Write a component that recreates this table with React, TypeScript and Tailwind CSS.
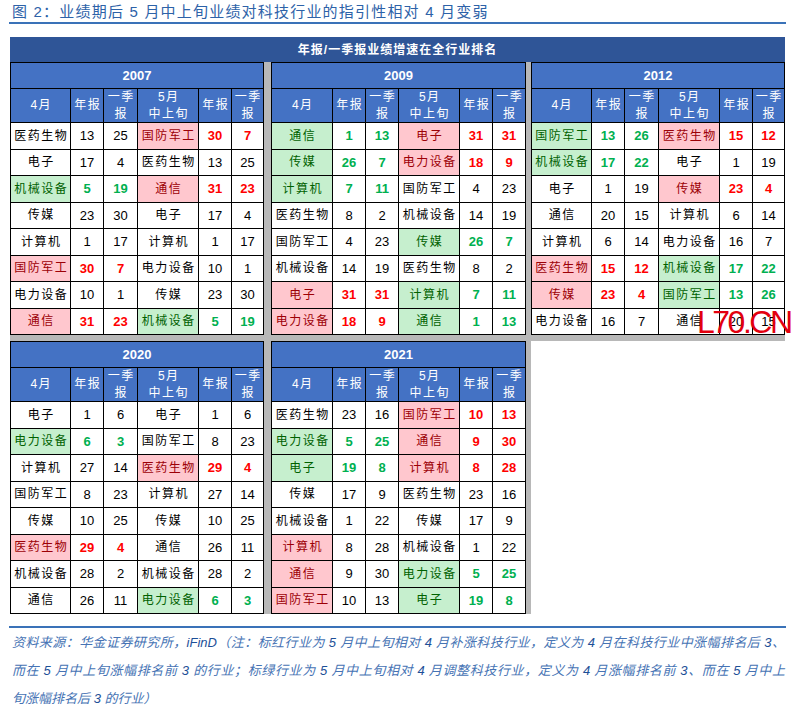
import React from "react";

type Mark = "r" | "g" | "n" | "";
// [name, 年报, 一季报, mark] ; mark "n" = pink name but plain numbers
type Side = [string, number, number, Mark];
type Row = [Side, Side];

const panels: { year: string; rows: Row[] }[] = [
  {
    year: "2007",
    rows: [
      [["医药生物", 13, 25, ""], ["国防军工", 30, 7, "r"]],
      [["电子", 17, 4, ""], ["医药生物", 13, 25, ""]],
      [["机械设备", 5, 19, "g"], ["通信", 31, 23, "r"]],
      [["传媒", 23, 30, ""], ["电子", 17, 4, ""]],
      [["计算机", 1, 17, ""], ["计算机", 1, 17, ""]],
      [["国防军工", 30, 7, "r"], ["电力设备", 10, 1, ""]],
      [["电力设备", 10, 1, ""], ["传媒", 23, 30, ""]],
      [["通信", 31, 23, "r"], ["机械设备", 5, 19, "g"]],
    ],
  },
  {
    year: "2009",
    rows: [
      [["通信", 1, 13, "g"], ["电子", 31, 31, "r"]],
      [["传媒", 26, 7, "g"], ["电力设备", 18, 9, "r"]],
      [["计算机", 7, 11, "g"], ["国防军工", 4, 23, ""]],
      [["医药生物", 8, 2, ""], ["机械设备", 14, 19, ""]],
      [["国防军工", 4, 23, ""], ["传媒", 26, 7, "g"]],
      [["机械设备", 14, 19, ""], ["医药生物", 8, 2, ""]],
      [["电子", 31, 31, "r"], ["计算机", 7, 11, "g"]],
      [["电力设备", 18, 9, "r"], ["通信", 1, 13, "g"]],
    ],
  },
  {
    year: "2012",
    rows: [
      [["国防军工", 13, 26, "g"], ["医药生物", 15, 12, "r"]],
      [["机械设备", 17, 22, "g"], ["电子", 1, 19, ""]],
      [["电子", 1, 19, ""], ["传媒", 23, 4, "r"]],
      [["通信", 20, 15, ""], ["计算机", 6, 14, ""]],
      [["计算机", 6, 14, ""], ["电力设备", 16, 7, ""]],
      [["医药生物", 15, 12, "r"], ["机械设备", 17, 22, "g"]],
      [["传媒", 23, 4, "r"], ["国防军工", 13, 26, "g"]],
      [["电力设备", 16, 7, ""], ["通信", 20, 15, ""]],
    ],
  },
  {
    year: "2020",
    rows: [
      [["电子", 1, 6, ""], ["电子", 1, 6, ""]],
      [["电力设备", 6, 3, "g"], ["国防军工", 8, 23, ""]],
      [["计算机", 27, 14, ""], ["医药生物", 29, 4, "r"]],
      [["国防军工", 8, 23, ""], ["计算机", 27, 14, ""]],
      [["传媒", 10, 25, ""], ["传媒", 10, 25, ""]],
      [["医药生物", 29, 4, "r"], ["通信", 26, 11, ""]],
      [["机械设备", 28, 2, ""], ["机械设备", 28, 2, ""]],
      [["通信", 26, 11, ""], ["电力设备", 6, 3, "g"]],
    ],
  },
  {
    year: "2021",
    rows: [
      [["医药生物", 23, 16, ""], ["国防军工", 10, 13, "r"]],
      [["电力设备", 5, 25, "g"], ["通信", 9, 30, "r"]],
      [["电子", 19, 8, "g"], ["计算机", 8, 28, "r"]],
      [["传媒", 17, 9, ""], ["医药生物", 23, 16, ""]],
      [["机械设备", 1, 22, ""], ["传媒", 17, 9, ""]],
      [["计算机", 8, 28, "n"], ["机械设备", 1, 22, ""]],
      [["通信", 9, 30, "n"], ["电力设备", 5, 25, "g"]],
      [["国防军工", 10, 13, "n"], ["电子", 19, 8, "g"]],
    ],
  },
];

const NameCell = ({ name, mark }: { name: string; mark: Mark }) => {
  let tone = "bg-white text-black";
  if (mark === "r" || mark === "n") tone = "bg-[#ffc7ce] text-[#9c0006]";
  if (mark === "g") tone = "bg-[#c6efce] text-[#006100]";
  return (
    <div className={`${tone} flex items-center justify-center text-[12px] tracking-[1.5px] pl-[1.5px]`}>
      {name}
    </div>
  );
};

const NumCell = ({ v, mark }: { v: number; mark: Mark }) => {
  let tone = "text-black";
  if (mark === "r") tone = "text-[#ff0000] font-bold";
  if (mark === "g") tone = "text-[#00b050] font-bold";
  return <div className={`${tone} bg-white flex items-center justify-center text-[13px]`}>{v}</div>;
};

const Head = ({ children }: { children: React.ReactNode }) => (
  <div className="bg-[#4472c4] text-white flex items-center justify-center text-center text-[12px] leading-[17px] tracking-[1.5px] pl-[1.5px]">
    {children}
  </div>
);

const Panel = ({ year, rows, wide }: { year: string; rows: Row[]; wide?: boolean }) => (
  <div
    className={`grid gap-px bg-black p-px grid-rows-[25px_33px_repeat(8,25.5px)] ${
      wide
        ? "w-[255px] grid-cols-[60px_32px_32px_60px_32px_32px]"
        : "w-[254px] grid-cols-[59px_32px_33px_60px_32px_31px]"
    }`}
  >
    <div className="col-span-6 bg-[#4472c4] text-white font-bold text-[13px] flex items-center justify-center">
      {year}
    </div>
    <Head>4月</Head>
    <Head>年报</Head>
    <Head>
      一季
      <br />报
    </Head>
    <Head>
      5月
      <br />
      中上旬
    </Head>
    <Head>年报</Head>
    <Head>
      一季
      <br />报
    </Head>
    {rows.map((row, i) => (
      <React.Fragment key={i}>
        {row.map((s, j) => (
          <React.Fragment key={j}>
            <NameCell name={s[0]} mark={s[3]} />
            <NumCell v={s[1]} mark={s[3] === "n" ? "" : s[3]} />
            <NumCell v={s[2]} mark={s[3] === "n" ? "" : s[3]} />
          </React.Fragment>
        ))}
      </React.Fragment>
    ))}
  </div>
);

const N = ({ children }: { children: React.ReactNode }) => (
  <span className="text-[#1d4f97]">{children}</span>
);

export default function App() {
  return (
    <div className="relative w-[792px] h-[714px] bg-white font-['Liberation_Sans','Noto_Sans_CJK_SC',sans-serif]">
      <div className="h-[22px] pl-[12px] text-[15px] leading-[24px] tracking-[1.2px] text-[#2d62a8] whitespace-nowrap">
        图 2：业绩期后 5 月中上旬业绩对科技行业的指引性相对 4 月变弱
      </div>
      <div className="ml-[9px] w-[777px] h-[2px] bg-[#3a72b8]" />

      <div className="ml-[10px] mt-[13px] w-[775px]">
        <div className="h-[25px] bg-[#2f5597] text-white font-bold text-[12px] tracking-[1px] flex items-center justify-center">
          年报/一季报业绩增速在全行业排名
        </div>
        <div className="flex bg-[#b8b8b8]">
          <Panel {...panels[0]} />
          <div className="ml-[7px]">
            <Panel {...panels[1]} wide />
          </div>
          <div className="ml-[5px]">
            <Panel {...panels[2]} />
          </div>
        </div>
        <div className="h-[6px] bg-[#b8b8b8]" />
        <div className="flex">
          <div className="flex bg-[#b8b8b8] pr-[5px]">
            <Panel {...panels[3]} />
            <div className="ml-[7px]">
              <Panel {...panels[4]} wide />
            </div>
          </div>
        </div>
      </div>

      <div className="ml-[9px] mt-[12px] w-[777px] h-[2px] bg-[#3a72b8]" />
      <div className="ml-[12px] w-[773px] pt-px italic text-[13px] leading-[28px] text-[#4673b4]">
        <div className="text-justify [text-align-last:justify] whitespace-nowrap">
          资料来源：华金证券研究所，<N>iFinD</N>（注：标红行业为 <N>5</N> 月中上旬相对 <N>4</N> 月补涨科技行业，定义为 <N>4</N> 月在科技行业中涨幅排名后 <N>3</N>、
        </div>
        <div className="text-justify [text-align-last:justify]">
          而在 <N>5</N> 月中上旬涨幅排名前 <N>3</N> 的行业；标绿行业为 <N>5</N> 月中上旬相对 <N>4</N> 月调整科技行业，定义为 <N>4</N> 月涨幅排名前 <N>3</N>、而在 <N>5</N> 月中上
        </div>
        <div>
          旬涨幅排名后 <N>3</N> 的行业）
        </div>
      </div>

      <div className="absolute left-[697px] top-[306px] text-[32px] leading-none tracking-[-2.5px] text-[#e3000f] font-['Liberation_Sans',sans-serif]">
        L70.CN
      </div>
    </div>
  );
}
